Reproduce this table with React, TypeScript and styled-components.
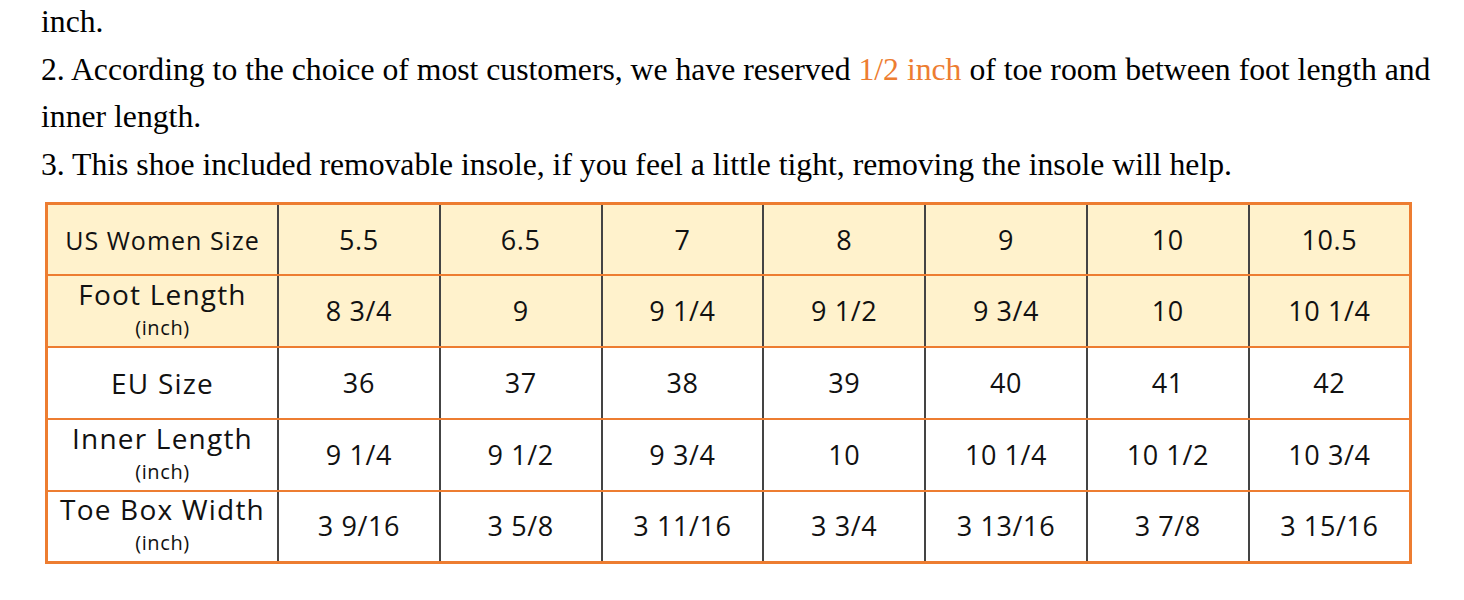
import React from "react";
import styled, { createGlobalStyle } from "styled-components";

const Global = createGlobalStyle`
  html, body { margin: 0; padding: 0; background: #ffffff; }
  body { width: 1464px; height: 600px; overflow: hidden; }
`;

const Page = styled.div`
  padding: 0 0 0 41px;
  margin-top: -2px;
  display: flex;
  flex-direction: column;
`;

const Notes = styled.div`
  font-family: "Liberation Serif", "Times New Roman", serif;
  font-size: 31.7px;
  line-height: 47.5px;
  color: #000;
`;

const Line = styled.div`
  white-space: nowrap;
`;

const Accent = styled.span`
  color: #ed7d31;
`;

const Table = styled.table`
  margin-top: 14px;
  margin-left: 4px;
  border-collapse: collapse;
  border: 3px solid #ed7d31;
  table-layout: fixed;
  width: 1367px;
  font-family: "Open Sans", "Noto Sans", sans-serif;
  color: #111;
`;

const Row = styled.tr<{ $tinted?: boolean }>`
  height: 71.8px;
  background: ${(p) => (p.$tinted ? "#fff2cc" : "#ffffff")};
`;

const Cell = styled.td<{ $label?: boolean }>`
  border-top: 2px solid #ed7d31;
  border-bottom: 2px solid #ed7d31;
  border-left: 2px solid #444444;
  border-right: 2px solid #444444;
  text-align: center;
  vertical-align: middle;
  padding: 0;
  font-size: 27px;
  letter-spacing: 0.6px;
  line-height: 30px;
  width: ${(p) => (p.$label ? "229px" : "auto")};
`;

const LabelStack = styled.div<{ $withUnit?: boolean }>`
  display: flex;
  flex-direction: column;
  align-items: center;
  padding-bottom: ${(p) => (p.$withUnit ? "4px" : "0")};
`;

const LabelMain = styled.div<{ $small?: boolean }>`
  font-size: ${(p) => (p.$small ? "25px" : "28px")};
  letter-spacing: ${(p) => (p.$small ? "1px" : "1.2px")};
  line-height: 32px;
`;

const Unit = styled.div`
  font-size: 20px;
  letter-spacing: 0.6px;
  line-height: 24px;
  margin-top: 6px;
`;

type RowData = {
  label: string;
  unit?: boolean;
  small?: boolean;
  tinted?: boolean;
  values: string[];
};

const rows: RowData[] = [
  { label: "US Women Size", small: true, tinted: true, values: ["5.5", "6.5", "7", "8", "9", "10", "10.5"] },
  { label: "Foot Length", unit: true, tinted: true, values: ["8 3/4", "9", "9 1/4", "9 1/2", "9 3/4", "10", "10 1/4"] },
  { label: "EU Size", values: ["36", "37", "38", "39", "40", "41", "42"] },
  { label: "Inner Length", unit: true, values: ["9 1/4", "9 1/2", "9 3/4", "10", "10 1/4", "10 1/2", "10 3/4"] },
  { label: "Toe Box Width", unit: true, values: ["3 9/16", "3 5/8", "3 11/16", "3 3/4", "3 13/16", "3 7/8", "3 15/16"] },
];

export default function App() {
  return (
    <>
      <Global />
      <Page>
        <Notes>
          <Line>inch.</Line>
          <Line>
            2. According to the choice of most customers, we have reserved <Accent>1/2 inch</Accent> of toe room between foot length and
          </Line>
          <Line>inner length.</Line>
          <Line>3. This shoe included removable insole, if you feel a little tight, removing the insole will help.</Line>
        </Notes>
        <Table>
          <tbody>
            {rows.map((r) => (
              <Row key={r.label} $tinted={r.tinted}>
                <Cell $label>
                  <LabelStack $withUnit={r.unit}>
                    <LabelMain $small={r.small}>{r.label}</LabelMain>
                    {r.unit && <Unit>(inch)</Unit>}
                  </LabelStack>
                </Cell>
                {r.values.map((v, i) => (
                  <Cell key={i}>{v}</Cell>
                ))}
              </Row>
            ))}
          </tbody>
        </Table>
      </Page>
    </>
  );
}
